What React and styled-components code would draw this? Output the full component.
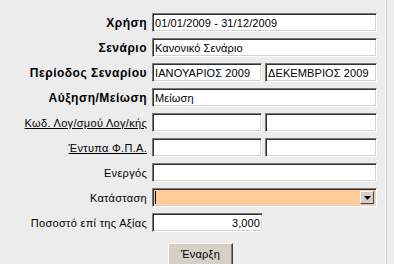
import React from "react";
import styled, { createGlobalStyle } from "styled-components";

const Global = createGlobalStyle`
  html, body { margin: 0; padding: 0; background: #ececec; }
  body { font-family: "Liberation Sans", Arial, sans-serif; font-size: 11px; color: #000; overflow: hidden; }
`;

const Page = styled.div`
  width: 394px;
  height: 264px;
  display: flex;
  overflow: hidden;
`;

const Panel = styled.div`
  width: 386px;
  height: 264px;
  box-sizing: border-box;
  border-right: 1px solid #f8f8f8;
  box-shadow: 1px 0 0 #d2d2d2;
  padding-top: 13px;
`;

const Form = styled.div`
  display: grid;
  grid-template-columns: 148px 225px;
  column-gap: 4px;
  row-gap: 6px;
  grid-auto-rows: 19px;
`;

const Label = styled.div`
  display: flex;
  align-items: center;
  justify-content: flex-end;
  padding-right: 1px;
  font-weight: ${(p) => (p.$bold ? 700 : 400)};
  font-size: ${(p) => (p.$bold ? "12px" : "11px")};
  letter-spacing: ${(p) => (p.$bold ? "0.5px" : "0.3px")};
  text-decoration: ${(p) => (p.$link ? "underline" : "none")};
  white-space: nowrap;
`;

const Pair = styled.div`
  display: grid;
  grid-template-columns: 110px 112px;
  column-gap: 3px;
`;

const Field = styled.div`
  box-sizing: border-box;
  height: 19px;
  width: ${(p) => p.$w || "100%"};
  background: ${(p) => p.$bg || "#fff"};
  border-style: solid;
  border-width: 1px;
  border-color: #7a7a7a #ffffff #ffffff #7a7a7a;
  box-shadow: inset 1px 1px 0 #303030, inset -1px -1px 0 #d6d3ce;
  display: flex;
  align-items: center;
  justify-content: ${(p) => (p.$right ? "flex-end" : "flex-start")};
  padding: 0 2px 0 2px;
  font-size: 11px;
  letter-spacing: 0.1px;
  white-space: nowrap;
  overflow: hidden;
  position: relative;
`;

const Caret = styled.span`
  display: inline-block;
  width: 1px;
  height: 13px;
  background: #000;
`;

const DropBtn = styled.div`
  position: absolute;
  right: 2px;
  top: 2px;
  width: 14px;
  height: 13px;
  background: #d4d0c8;
  border-style: solid;
  border-width: 1px;
  border-color: #ffffff #404040 #404040 #ffffff;
  box-sizing: border-box;
  display: flex;
  align-items: center;
  justify-content: center;
`;

const ButtonRow = styled.div`
  padding-left: 168px;
  padding-top: 11px;
`;

const Button = styled.div`
  box-sizing: border-box;
  width: 65px;
  height: 26px;
  background: #d4d0c8;
  border-style: solid;
  border-width: 1px;
  border-color: #ffffff #404040 #404040 #ffffff;
  box-shadow: inset -1px -1px 0 #808080;
  display: flex;
  align-items: flex-start;
  justify-content: center;
  padding-top: 4px;
  font-size: 11px;
  letter-spacing: 0.2px;
`;

export default function App() {
  return (
    <>
      <Global />
      <Page>
        <Panel>
          <Form>
            <Label $bold>Χρήση</Label>
            <Field>01/01/2009 - 31/12/2009</Field>

            <Label $bold>Σενάριο</Label>
            <Field>Κανονικό Σενάριο</Field>

            <Label $bold>Περίοδος Σεναρίου</Label>
            <Pair>
              <Field>ΙΑΝΟΥΑΡΙΟΣ 2009</Field>
              <Field>ΔΕΚΕΜΒΡΙΟΣ 2009</Field>
            </Pair>

            <Label $bold>Αύξηση/Μείωση</Label>
            <Field>Μείωση</Field>

            <Label $link>Κωδ. Λογ/σμού Λογ/κής</Label>
            <Pair>
              <Field />
              <Field />
            </Pair>

            <Label $link>Έντυπα Φ.Π.Α.</Label>
            <Pair>
              <Field />
              <Field />
            </Pair>

            <Label>Ενεργός</Label>
            <Field />

            <Label>Κατάσταση</Label>
            <Field $bg="#ffcc99">
              <Caret />
              <DropBtn>
                <svg width="7" height="4" viewBox="0 0 7 4">
                  <path d="M0 0 H7 L3.5 4 Z" fill="#000" />
                </svg>
              </DropBtn>
            </Field>

            <Label>Ποσοστό επί της Αξίας</Label>
            <Field $w="111px" $right>3,000</Field>
          </Form>
          <ButtonRow>
            <Button>Έναρξη</Button>
          </ButtonRow>
        </Panel>
      </Page>
    </>
  );
}
